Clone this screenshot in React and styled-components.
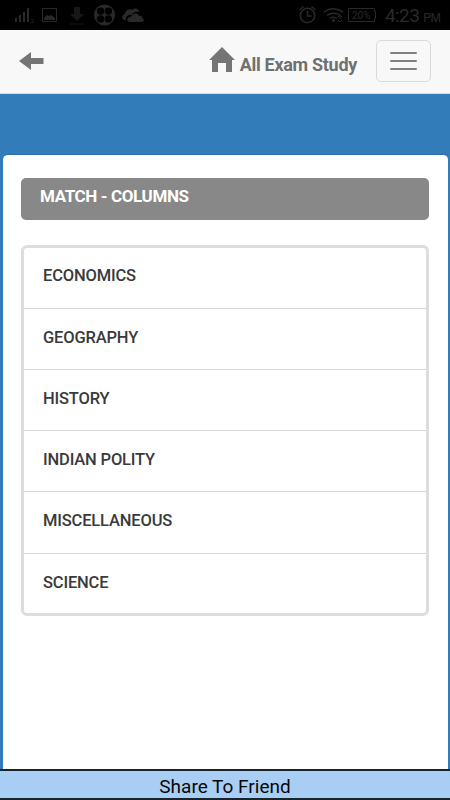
import styled, { createGlobalStyle } from "styled-components";

const GlobalStyle = createGlobalStyle`
  * {
    box-sizing: border-box;
  }
  body {
    margin: 0;
    font-family: Roboto, sans-serif;
    background-color: #327cb9;
  }
`;

const Container = styled.div`
  width: 450px;
  height: 800px;
  display: flex;
  flex-direction: column;
  overflow: hidden;
  background-color: #327cb9;
`;

const StatusBar = styled.div`
  height: 30px;
  flex: none;
  display: flex;
  justify-content: space-between;
  background-color: #000;
  color: #292929;
`;

const Clock = styled.span`
  margin-left: 9px;
  font-size: 19px;
  line-height: 32px;
  letter-spacing: -0.6px;
  white-space: nowrap;
`;

const Meridiem = styled.span`
  margin-left: 4px;
  font-size: 12px;
  letter-spacing: -0.2px;
`;

const StatusRight = styled.div`
  display: flex;
  width: 155px;
`;

const Navbar = styled.header`
  height: 64px;
  flex: none;
  display: flex;
  align-items: center;
  padding: 0 19px 2px;
  background-color: #f8f8f8;
  border-bottom: 1px solid #c9e0f0;
  color: #707070;
`;

const Brand = styled.div`
  display: flex;
  margin-left: auto;
  margin-right: 19px;
`;

const BrandName = styled.span`
  margin: 8px 0 0 5px;
  font-size: 18px;
  line-height: 28px;
  font-weight: 700;
  letter-spacing: -0.3px;
  white-space: nowrap;
`;

const Toggle = styled.button`
  width: 55px;
  height: 42px;
  display: flex;
  flex-direction: column;
  align-items: center;
  justify-content: center;
  gap: 6px;
  padding: 0;
  background: transparent;
  border: 1px solid #dadada;
  border-radius: 5px;
`;

const Bar = styled.span`
  width: 27px;
  height: 2px;
  border-radius: 1px;
  background-color: #808080;
`;

const Card = styled.main`
  flex: 1;
  margin: 60px 2.5px 0;
  padding: 22.5px 18.5px 0;
  border-top: 1px solid #286da6;
  border-radius: 5px 5px 0 0;
  background-color: #fff;
`;

const Heading = styled.h1`
  height: 42.5px;
  margin: 0 0 25px;
  padding-left: 19px;
  border-radius: 5px;
  background-color: #888;
  color: #fff;
  font-size: 17px;
  font-weight: 700;
  line-height: 37px;
  letter-spacing: -0.38px;
`;

const List = styled.ul`
  margin: 0;
  padding: 0;
  list-style: none;
  border: 3px solid #ddd;
  border-radius: 6px;
`;

const Item = styled.li`
  height: 61.2px;
  padding-left: 19px;
  font-size: 16.5px;
  font-weight: 500;
  line-height: 57px;
  letter-spacing: -0.17px;
  color: #3a3a3a;

  &:first-child {
    height: 59.8px;
    line-height: 55px;
  }

  &:last-child {
    height: 60.5px;
  }

  & + & {
    border-top: 1px solid #d8d8d8;
  }
`;

const ShareButton = styled.button`
  height: 31px;
  flex: none;
  padding: 2px 0 0;
  border: solid #17232d;
  border-width: 2px 0;
  background-color: #a9cef4;
  color: #080808;
  font-family: inherit;
  font-size: 19px;
  line-height: 27px;
`;

const subjects = ["ECONOMICS", "GEOGRAPHY", "HISTORY", "INDIAN POLITY", "MISCELLANEOUS", "SCIENCE"];

const LeftIcons = () => (
  <svg width="150" height="30" fill="#292929">
    <path d="M15 18h2v4h-2zM19 15h2v7h-2zM23 12h2v10h-2zM27 8h2v14h-2z" />
    <text x="30.5" y="23" fontSize="6">2</text>
    <path d="M42.500 8.500h14v13h-14z" fill="none" stroke="#292929" />
    <path d="M44 20v-2l3-3 2 1 2-1 4 3v2z" />
    <path d="M74 7h6v7h4l-7 7-7-7h4zM70 23.500h14v1H70z" fill="#171717" />
    <circle cx="104.5" cy="15" r="10.5" />
    <g fill="#000">
      <circle cx="100.6" cy="11.1" r="3.7" />
      <circle cx="108.4" cy="11.1" r="3.7" />
      <circle cx="100.6" cy="18.9" r="3.7" />
      <circle cx="108.4" cy="18.9" r="3.7" />
    </g>
    <path d="M126 20h-2c-3-2-2-5 1-6 0-3 4-6 7-4 3-3 7-1 7 2-5-1-6 1-7 3-4-1-7 2-6 5z" />
    <path d="M129 22c-3-1-2-5 2-5 1-4 7-5 8-1 3-1 3 1 3 2 3 1 2 4-1 4z" />
  </svg>
);

const RightIcons = () => (
  <svg width="81" height="30" fill="none" stroke="#292929" strokeWidth="1.5">
    <circle cx="12.5" cy="15.5" r="7.2" />
    <path d="M12.5 11v5h4M4.5 10l4-3.500M16.500 6.500l4 3.500" />
    <path d="M29 12q9-6.500 19 0M32 15.500q6.500-4.500 13 0M35 18.500q3.500-2.500 7 0" />
    <circle cx="38.5" cy="20.5" r=".8" />
    <path d="M45 15v4M43 17l2-2 2 2M47 20l-2 2-2-2" strokeWidth="1" />
    <path d="M53.500 8.500h26v3h1v7h-1v3h-26z" strokeWidth="1" />
    <text x="57" y="19" fontSize="10" fill="#292929" stroke="none">20%</text>
  </svg>
);

const App = () => {
  return (
    <>
      <GlobalStyle />
      <Container>
        <StatusBar>
          <LeftIcons />
          <StatusRight>
            <RightIcons />
            <Clock>
              4:23<Meridiem>PM</Meridiem>
            </Clock>
          </StatusRight>
        </StatusBar>
        <Navbar>
          <svg width="25" height="20" fill="#757575">
            <path d="M0 10l12-9v6h12.500v6H12v6z" />
          </svg>
          <Brand>
            <svg width="26" height="32" fill="#757575">
              <path d="M13 4l13 13h-3v12h-6v-9H9v9H3V17H0z" />
            </svg>
            <BrandName>All Exam Study</BrandName>
          </Brand>
          <Toggle aria-label="Menu">
            <Bar />
            <Bar />
            <Bar />
          </Toggle>
        </Navbar>
        <Card>
          <Heading>MATCH - COLUMNS</Heading>
          <List>
            {subjects.map((subject) => (
              <Item key={subject}>{subject}</Item>
            ))}
          </List>
        </Card>
        <ShareButton>Share To Friend</ShareButton>
      </Container>
    </>
  );
};

export default App;
